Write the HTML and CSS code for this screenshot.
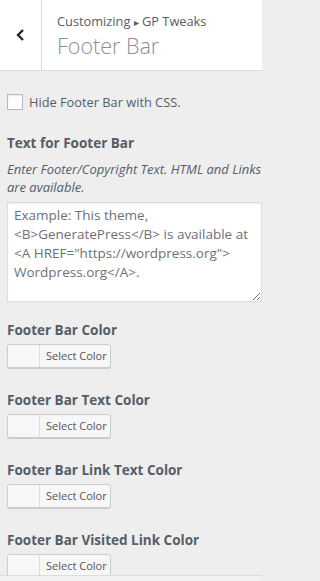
FILE: index.html
```html
<!DOCTYPE html>
<html>
<head>
<meta charset="utf-8">
<link rel="stylesheet" href="styles.css">
</head>
<body>
<div class="panel">
  <header class="head">
    <button class="back" aria-label="Back">
      <svg width="12" height="14" viewBox="0 0 12 14"><path d="M8 2 L3 7 L8 12" fill="none" stroke="#23282d" stroke-width="2.4"/></svg>
    </button>
    <div class="titles">
      <div class="crumb">Customizing <span class="tri">▸</span> GP Tweaks</div>
      <div class="title">Footer Bar</div>
    </div>
  </header>
  <main class="body">
    <label class="check"><span class="box"></span><span>Hide Footer Bar with CSS.</span></label>
    <div class="field">
      <div class="label">Text for Footer Bar</div>
      <div class="desc">Enter Footer/Copyright Text. HTML and Links are available.</div>
      <textarea class="ta" placeholder="Example: This theme, <B>GeneratePress</B> is available at <A HREF=&quot;https://wordpress.org&quot;> Wordpress.org</A>."></textarea>
    </div>
    <div class="field color">
      <div class="label">Footer Bar Color</div>
      <div class="picker"><span class="swatch"></span><span class="sel">Select Color</span></div>
    </div>
    <div class="field color">
      <div class="label">Footer Bar Text Color</div>
      <div class="picker"><span class="swatch"></span><span class="sel">Select Color</span></div>
    </div>
    <div class="field color">
      <div class="label">Footer Bar Link Text Color</div>
      <div class="picker"><span class="swatch"></span><span class="sel">Select Color</span></div>
    </div>
    <div class="field color">
      <div class="label">Footer Bar Visited Link Color</div>
      <div class="picker"><span class="swatch"></span><span class="sel">Select Color</span></div>
    </div>
  </main>
  <footer class="foot"></footer>
</div>
</body>
</html>
```
FILE: styles.css
```css
html, body { margin: 0; padding: 0; background: #eee; }
body {
  width: 262px;
  height: 581px;
  overflow: hidden;
  font-family: "Open Sans", "Noto Sans", sans-serif;
  color: #555d66;
}
.panel { position: relative; width: 262px; height: 581px; overflow: hidden; }
.head {
  display: flex;
  height: 70px;
  background: #fff;
  border-bottom: 1px solid #ddd;
}
.back {
  width: 42px;
  flex: none;
  border: 0;
  border-right: 1px solid #ddd;
  background: #fff;
  padding: 0;
  display: flex;
  align-items: center;
  justify-content: center;
}
.titles { padding: 12px 0 0 15px; white-space: nowrap; }
.crumb { font-size: 12.8px; line-height: 18px; color: #555d66; }
.tri { font-size: 10px; }
.title { font-size: 21.5px; line-height: 28px; font-weight: 300; color: #8c8f94; margin-top: 1px; }
.body { padding: 23px 0 0 7px; }
.check { display: flex; align-items: center; gap: 6px; font-size: 12.8px; height: 16px; }
.box {
  width: 14px; height: 14px; border: 1px solid #b4b9be; background: #fff;
  box-shadow: inset 0 1px 2px rgba(0,0,0,.1);
  flex: none;
}
.field { margin-top: 24px; }
.label { font-size: 13.5px; font-weight: 700; line-height: 18px; color: #555d66; white-space: nowrap; }
.desc { width: 268px; font-size: 13px; font-style: italic; line-height: 18px; margin-top: 8px; }
.ta {
  display: block;
  box-sizing: border-box;
  width: 255px;
  height: 100px;
  margin-top: 6px;
  border: 1px solid #ddd;
  background: #fff;
  font-family: "Open Sans", "Noto Sans", sans-serif;
  font-size: 13.5px;
  line-height: 19px;
  padding: 3px 6px;
  resize: both;
  box-shadow: inset 0 1px 2px rgba(0,0,0,.07);
}
.ta::placeholder { color: #6c7177; opacity: 1; }
.color { margin-top: 19px; }
.color + .color { margin-top: 23px; }
.picker {
  display: flex;
  width: 104px;
  height: 24px;
  box-sizing: border-box;
  margin-top: 5px;
  border: 1px solid #ccc;
  border-radius: 3px;
  box-shadow: 0 1px 0 #ccc;
  background: #f7f7f7;
  overflow: hidden;
}
.swatch { width: 31px; border-right: 1px solid #ddd; background: #f7f7f7; }
.sel { font-size: 11px; line-height: 22px; padding-left: 6px; color: #555; }
.foot {
  position: absolute;
  left: 0; right: 0; bottom: 0;
  height: 5px;
  background: #f1f1f1;
  border-top: 1px solid #ddd;
}
```
